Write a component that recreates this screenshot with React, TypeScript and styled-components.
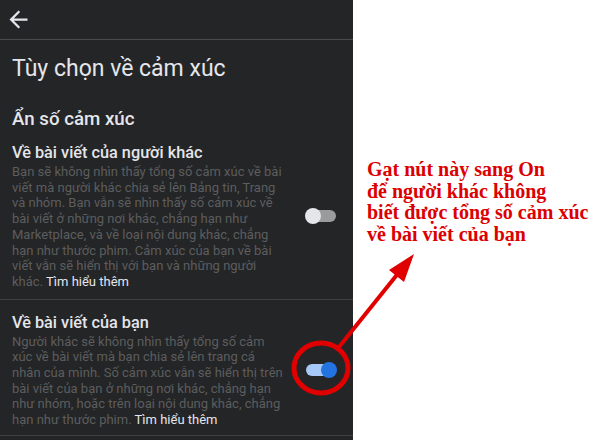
import React from 'react';
import styled, { createGlobalStyle } from 'styled-components';

const GlobalStyle = createGlobalStyle`
  html, body {
    margin: 0;
    padding: 0;
    background: #ffffff;
  }
`;

const Page = styled.div`
  position: relative;
  display: flex;
  width: 600px;
  height: 440px;
  overflow: hidden;
  background: #ffffff;
`;

const Phone = styled.div`
  width: 353px;
  flex-shrink: 0;
  background: #242526;
  display: flex;
  flex-direction: column;
  font-family: Roboto, 'Noto Sans', sans-serif;
`;

const TopBar = styled.div`
  height: 40px;
  display: flex;
  align-items: center;
  padding-left: 5px;
  border-bottom: 1px solid #4a4b4d;
  box-sizing: border-box;
`;

const BackButton = styled.button`
  border: none;
  background: none;
  padding: 0;
  display: flex;
  color: #e4e6eb;
`;

const Title = styled.h1`
  margin: 0;
  padding: 15px 12px 0;
  font-size: 23px;
  line-height: 28px;
  font-weight: 400;
  color: #e4e6eb;
`;

const GroupTitle = styled.h2`
  margin: 0;
  padding: 24px 12px 8px;
  font-size: 18.7px;
  line-height: 24px;
  font-weight: 500;
  color: #e4e6eb;
`;

const Setting = styled.div<{ $last?: boolean }>`
  display: flex;
  align-items: center;
  padding: ${(p) => (p.$last ? '13px 12px 7px' : '4px 12px 9px')};
  border-bottom: 1px solid #3e4042;
`;

const SettingText = styled.div`
  flex: 1;
`;

const SettingName = styled.div`
  font-size: 16.3px;
  line-height: 20px;
  font-weight: 500;
  color: #e4e6eb;
  margin-bottom: 1px;
`;

const SettingDesc = styled.div`
  font-size: 13px;
  line-height: 15.7px;
  color: #5c5d5f;
`;

const Line = styled.span`
  display: block;
  white-space: nowrap;
`;

const LearnMore = styled.span`
  color: #e4e6eb;
`;

const Track = styled.div<{ $on?: boolean }>`
  position: relative;
  width: 30px;
  height: 12px;
  margin-right: 5px;
  border-radius: 6px;
  background: ${(p) => (p.$on ? '#a7c9f7' : '#9a9b9d')};
`;

const Knob = styled.div<{ $on?: boolean }>`
  position: absolute;
  top: -2px;
  left: ${(p) => (p.$on ? '15px' : '-1px')};
  width: 16px;
  height: 16px;
  border-radius: 50%;
  background: ${(p) => (p.$on ? '#2374e1' : '#e4e6eb')};
`;

const Note = styled.div`
  flex: 1;
  padding: 159px 0 0 14px;
  font-family: 'Liberation Serif', 'Times New Roman', serif;
  font-weight: 700;
  font-size: 20px;
  line-height: 21.7px;
  color: #dc0000;
`;

const Overlay = styled.svg`
  position: absolute;
  inset: 0;
  pointer-events: none;
`;

const others = [
  'Bạn sẽ không nhìn thấy tổng số cảm xúc về bài',
  'viết mà người khác chia sẻ lên Bảng tin, Trang',
  'và nhóm. Bạn vẫn sẽ nhìn thấy số cảm xúc về',
  'bài viết ở những nơi khác, chẳng hạn như',
  'Marketplace, và về loại nội dung khác, chẳng',
  'hạn như thước phim. Cảm xúc của bạn về bài',
  'viết vẫn sẽ hiển thị với bạn và những người',
  'khác.',
];

const mine = [
  'Người khác sẽ không nhìn thấy tổng số cảm',
  'xúc về bài viết mà bạn chia sẻ lên trang cá',
  'nhân của mình. Số cảm xúc vẫn sẽ hiển thị trên',
  'bài viết của bạn ở những nơi khác, chẳng hạn',
  'như nhóm, hoặc trên loại nội dung khác, chẳng',
  'hạn như thước phim.',
];

const Toggle = ({ on }: { on?: boolean }) => (
  <Track $on={on}>
    <Knob $on={on} />
  </Track>
);

const Description = ({ lines }: { lines: string[] }) => (
  <SettingDesc>
    {lines.map((l, i) =>
      i === lines.length - 1 ? (
        <Line key={i}>
          {l} <LearnMore>Tìm hiểu thêm</LearnMore>
        </Line>
      ) : (
        <Line key={i}>{l}</Line>
      )
    )}
  </SettingDesc>
);

const App: React.FC = () => {
  return (
    <Page>
      <GlobalStyle />
      <Phone>
        <TopBar>
          <BackButton>
            <svg width="27" height="27" viewBox="0 0 24 24" fill="currentColor">
              <path d="M20 11H7.83l5.59-5.59L12 4l-8 8 8 8 1.41-1.41L7.83 13H20v-2z" />
            </svg>
          </BackButton>
        </TopBar>
        <Title>Tùy chọn về cảm xúc</Title>
        <GroupTitle>Ẩn số cảm xúc</GroupTitle>
        <Setting>
          <SettingText>
            <SettingName>Về bài viết của người khác</SettingName>
            <Description lines={others} />
          </SettingText>
          <Toggle />
        </Setting>
        <Setting $last>
          <SettingText>
            <SettingName>Về bài viết của bạn</SettingName>
            <Description lines={mine} />
          </SettingText>
          <Toggle on />
        </Setting>
      </Phone>
      <Note>
        Gạt nút này sang On
        <br />
        để người khác không
        <br />
        biết được tổng số cảm xúc
        <br />
        về bài viết của bạn
      </Note>
      {/* red callout: circle round the switch and arrow to the note */}
      <Overlay width="600" height="440">
        <ellipse cx="321" cy="368" rx="27" ry="25" fill="none" stroke="#e00000" strokeWidth="5" />
        <line x1="339" y1="347" x2="400" y2="271" stroke="#e00000" strokeWidth="4" />
        <polygon points="414,254 404,282 389,270" fill="#e00000" />
      </Overlay>
    </Page>
  );
};

export default App;
